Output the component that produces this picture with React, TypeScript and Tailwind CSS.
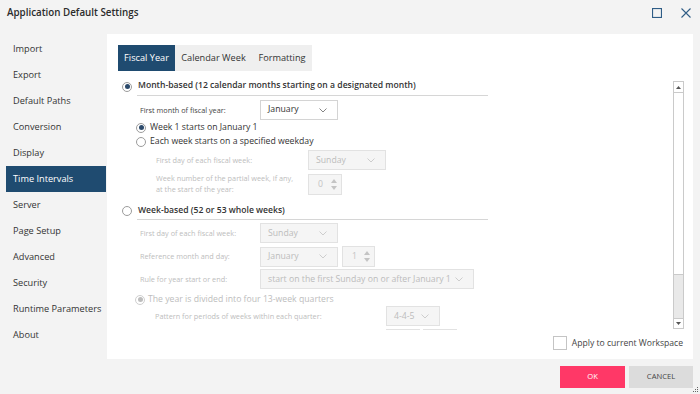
import React from 'react';

const navItems = [
  'Import',
  'Export',
  'Default Paths',
  'Conversion',
  'Display',
  'Time Intervals',
  'Server',
  'Page Setup',
  'Advanced',
  'Security',
  'Runtime Parameters',
  'About',
];

function Chevron({ disabled }: { disabled?: boolean }) {
  return (
    <svg width="8" height="5" viewBox="0 0 8 5" className="shrink-0">
      <polyline
        points="0.5,0.5 4,4 7.5,0.5"
        fill="none"
        stroke={disabled ? '#c8c8c8' : '#777'}
        strokeWidth="0.9"
      />
    </svg>
  );
}

function Radio({ checked, disabled }: { checked?: boolean; disabled?: boolean }) {
  return (
    <span
      className={
        disabled
          ? 'flex h-[10px] w-[10px] shrink-0 items-center justify-center rounded-full border border-[#cfcfcf] bg-white'
          : 'flex h-[10px] w-[10px] shrink-0 items-center justify-center rounded-full border border-[#9c9c9c] bg-white'
      }
    >
      {checked && (
        <span
          className={
            disabled
              ? 'h-[5px] w-[5px] rounded-full bg-[#bdbdbd]'
              : 'h-[5px] w-[5px] rounded-full bg-[#2c4a6b]'
          }
        />
      )}
    </span>
  );
}

function Select({
  value,
  width,
  disabled,
}: {
  value: string;
  width: string;
  disabled?: boolean;
}) {
  return (
    <div
      className={`${width} flex h-[20px] shrink-0 items-center justify-between whitespace-nowrap pl-[7px] pr-[10px] text-[8.7px] ${
        disabled
          ? 'border border-[#e2e2e2] bg-[#f5f5f5] text-[#bcbcbc]'
          : 'border border-[#d4d4d4] bg-white text-[#333]'
      }`}
    >
      <span>{value}</span>
      <Chevron disabled={disabled} />
    </div>
  );
}

function Spinner({ value, width }: { value: string; width: string }) {
  return (
    <div
      className={`${width} flex h-[21px] shrink-0 items-center justify-between border border-[#e2e2e2] bg-[#f5f5f5] pl-[9px] pr-[4px] text-[8.7px] text-[#c4c4c4]`}
    >
      <span>{value}</span>
      <div className="flex flex-col gap-[3px]">
        <svg width="6" height="4" viewBox="0 0 6 4">
          <polygon points="3,0 6,4 0,4" fill="#c4c4c4" />
        </svg>
        <svg width="6" height="4" viewBox="0 0 6 4">
          <polygon points="0,0 6,0 3,4" fill="#c4c4c4" />
        </svg>
      </div>
    </div>
  );
}

function Scrollbar() {
  return (
    <div className="mt-[4px] flex h-[248px] w-[11px] shrink-0 flex-col border border-[#cacaca] bg-[#e9e9e9]">
      <div className="flex h-[11px] items-center justify-center border-b border-[#cacaca] bg-white">
        <svg width="5" height="3" viewBox="0 0 5 3">
          <polygon points="2.5,0 5,3 0,3" fill="#555" />
        </svg>
      </div>
      <div className="h-[182px] border-b border-[#cacaca] bg-white" />
      <div className="flex-1" />
      <div className="flex h-[10px] items-center justify-center border-t border-[#cacaca] bg-white">
        <svg width="5" height="3" viewBox="0 0 5 3">
          <polygon points="0,0 5,0 2.5,3" fill="#555" />
        </svg>
      </div>
    </div>
  );
}

export default function App() {
  return (
    <div
      className="flex h-[394px] w-[700px] flex-col overflow-hidden whitespace-nowrap bg-[#f3f3f3] text-[#333]"
      style={{ fontFamily: '"Open Sans", "Liberation Sans", sans-serif' }}
    >
      {/* title bar */}
      <div className="flex h-[34px] shrink-0 items-center justify-between pl-[7px] pr-[9px]">
        <span className="pb-[8px] text-[9.8px] font-semibold text-[#2b2b2b]">
          Application Default Settings
        </span>
        <div className="flex items-center gap-[19px] pb-[8px]">
          <svg width="10" height="10" viewBox="0 0 10 10">
            <rect x="0.5" y="0.5" width="9" height="9" fill="none" stroke="#2f5d86" strokeWidth="1.2" />
          </svg>
          <svg width="10" height="10" viewBox="0 0 10 10">
            <path d="M0.5 0.5 L9.5 9.5 M9.5 0.5 L0.5 9.5" stroke="#2f5d86" strokeWidth="1.1" />
          </svg>
        </div>
      </div>

      <div className="flex h-[325px] shrink-0">
        {/* sidebar */}
        <div className="flex w-[107px] shrink-0 flex-col pl-[6px] pt-[2px]">
          {navItems.map((item) =>
            item === 'Time Intervals' ? (
              <div
                key={item}
                className="flex h-[26px] w-[100px] items-center bg-[#1f4b70] pl-[7px] text-[9.2px] text-white"
              >
                {item}
              </div>
            ) : (
              <div key={item} className="flex h-[26px] items-center pl-[7px] text-[9.2px] text-[#333]">
                {item}
              </div>
            )
          )}
        </div>

        {/* content panel */}
        <div className="flex w-[586px] flex-col bg-white pl-[11px] pr-[9px] pt-[11px]">
          <div className="flex h-[26px] w-[194px] bg-[#efefef] text-[9.2px]">
            <div className="flex w-[57px] items-center justify-center bg-[#1f4b70] text-white">Fiscal Year</div>
            <div className="flex w-[77px] items-center justify-center text-[#333]">Calendar Week</div>
            <div className="flex flex-1 items-center justify-center text-[#333]">Formatting</div>
          </div>

          <div className="mt-[6px] flex h-[253px]">
            <div className="flex flex-1 flex-col overflow-hidden">
              {/* month-based */}
              <div className="flex items-center pl-[4px]">
                <Radio checked />
                <div className="ml-[5px] flex h-[19px] w-[351px] items-center border-b border-[#d6d6d6] pl-[1px] pb-[1px] text-[8.6px] font-semibold text-[#333]">
                  Month-based (12 calendar months starting on a designated month)
                </div>
              </div>
              <div className="mt-[4px] flex items-center pl-[22px]">
                <span className="w-[120px] text-[7.3px] text-[#444]">First month of fiscal year:</span>
                <Select value="January" width="w-[78px]" />
              </div>
              <div className="mt-[1px] flex h-[14px] items-center gap-[4px] pl-[18px] text-[8.7px] text-[#333]">
                <Radio checked />
                <span>Week 1 starts on January 1</span>
              </div>
              <div className="mt-[1px] flex h-[14px] items-center gap-[4px] pl-[18px] text-[8.7px] text-[#333]">
                <Radio />
                <span>Each week starts on a specified weekday</span>
              </div>
              <div className="mt-[2px] flex items-center pl-[38px]">
                <span className="w-[152px] text-[7.3px] text-[#bdbdbd]">First day of each fiscal week:</span>
                <Select value="Sunday" width="w-[78px]" disabled />
              </div>
              <div className="mt-[3px] flex items-center pl-[38px]">
                <span className="w-[152px] text-[7.3px] leading-[11px] text-[#bdbdbd]">
                  Week number of the partial week, if any,
                  <br />
                  at the start of the year:
                </span>
                <Spinner value="0" width="w-[34px]" />
              </div>

              {/* week-based */}
              <div className="mt-[7px] flex items-center pl-[4px]">
                <Radio />
                <div className="ml-[5px] flex h-[18px] w-[351px] items-center border-b border-[#d6d6d6] pl-[1px] text-[8.6px] font-semibold text-[#333]">
                  Week-based (52 or 53 whole weeks)
                </div>
              </div>
              <div className="mt-[3px] flex items-center pl-[22px]">
                <span className="w-[120px] text-[7.3px] text-[#bdbdbd]">First day of each fiscal week:</span>
                <Select value="Sunday" width="w-[78px]" disabled />
              </div>
              <div className="mt-[3px] flex items-center pl-[22px]">
                <span className="w-[120px] text-[7.3px] text-[#bdbdbd]">Reference month and day:</span>
                <Select value="January" width="w-[78px]" disabled />
                <div className="ml-[4px]">
                  <Spinner value="1" width="w-[33px]" />
                </div>
              </div>
              <div className="mt-[2px] flex items-center pl-[22px]">
                <span className="w-[120px] text-[7.3px] text-[#bdbdbd]">Rule for year start or end:</span>
                <Select value="start on the first Sunday on or after January 1" width="w-[214px]" disabled />
              </div>
              <div className="mt-[4px] flex h-[14px] items-center gap-[3px] pl-[17px] text-[8.7px] text-[#bdbdbd]">
                <Radio checked disabled />
                <span>The year is divided into four 13-week quarters</span>
              </div>
              <div className="flex items-center pl-[37px]">
                <span className="w-[231px] text-[7.3px] text-[#bdbdbd]">Pattern for periods of weeks within each quarter:</span>
                <Select value="4-4-5" width="w-[54px]" disabled />
              </div>
              <div className="mt-[3px] flex gap-[3px] pl-[268px]">
                <div className="h-[20px] w-[34px] shrink-0 border border-[#e2e2e2] bg-[#f5f5f5]" />
                <div className="h-[20px] w-[34px] shrink-0 border border-[#e2e2e2] bg-[#f5f5f5]" />
              </div>
            </div>
            <Scrollbar />
          </div>

          <div className="mt-[6px] flex items-center justify-end gap-[5px] pr-[1px]">
            <span className="h-[14px] w-[14px] border border-[#c4c4c4] bg-white" />
            <span className="text-[8.6px] text-[#444]">Apply to current Workspace</span>
          </div>
        </div>
      </div>

      {/* footer */}
      <div className="relative flex flex-1 items-start justify-end gap-[4px] pr-[7px] pt-[7px]">
        <button className="h-[22px] w-[65px] bg-[#ff3867] text-[7.6px] text-white">OK</button>
        <button className="h-[22px] w-[64px] bg-[#dcdcdc] text-[7.6px] text-[#444]">CANCEL</button>
        <svg className="absolute bottom-[1px] right-[1px]" width="6" height="6" viewBox="0 0 6 6">
          <rect x="4" y="0" width="1" height="1" fill="#666" />
          <rect x="2" y="2" width="1" height="1" fill="#666" />
          <rect x="4" y="2" width="1" height="1" fill="#666" />
          <rect x="0" y="4" width="1" height="1" fill="#666" />
          <rect x="2" y="4" width="1" height="1" fill="#666" />
          <rect x="4" y="4" width="1" height="1" fill="#666" />
        </svg>
      </div>
    </div>
  );
}
